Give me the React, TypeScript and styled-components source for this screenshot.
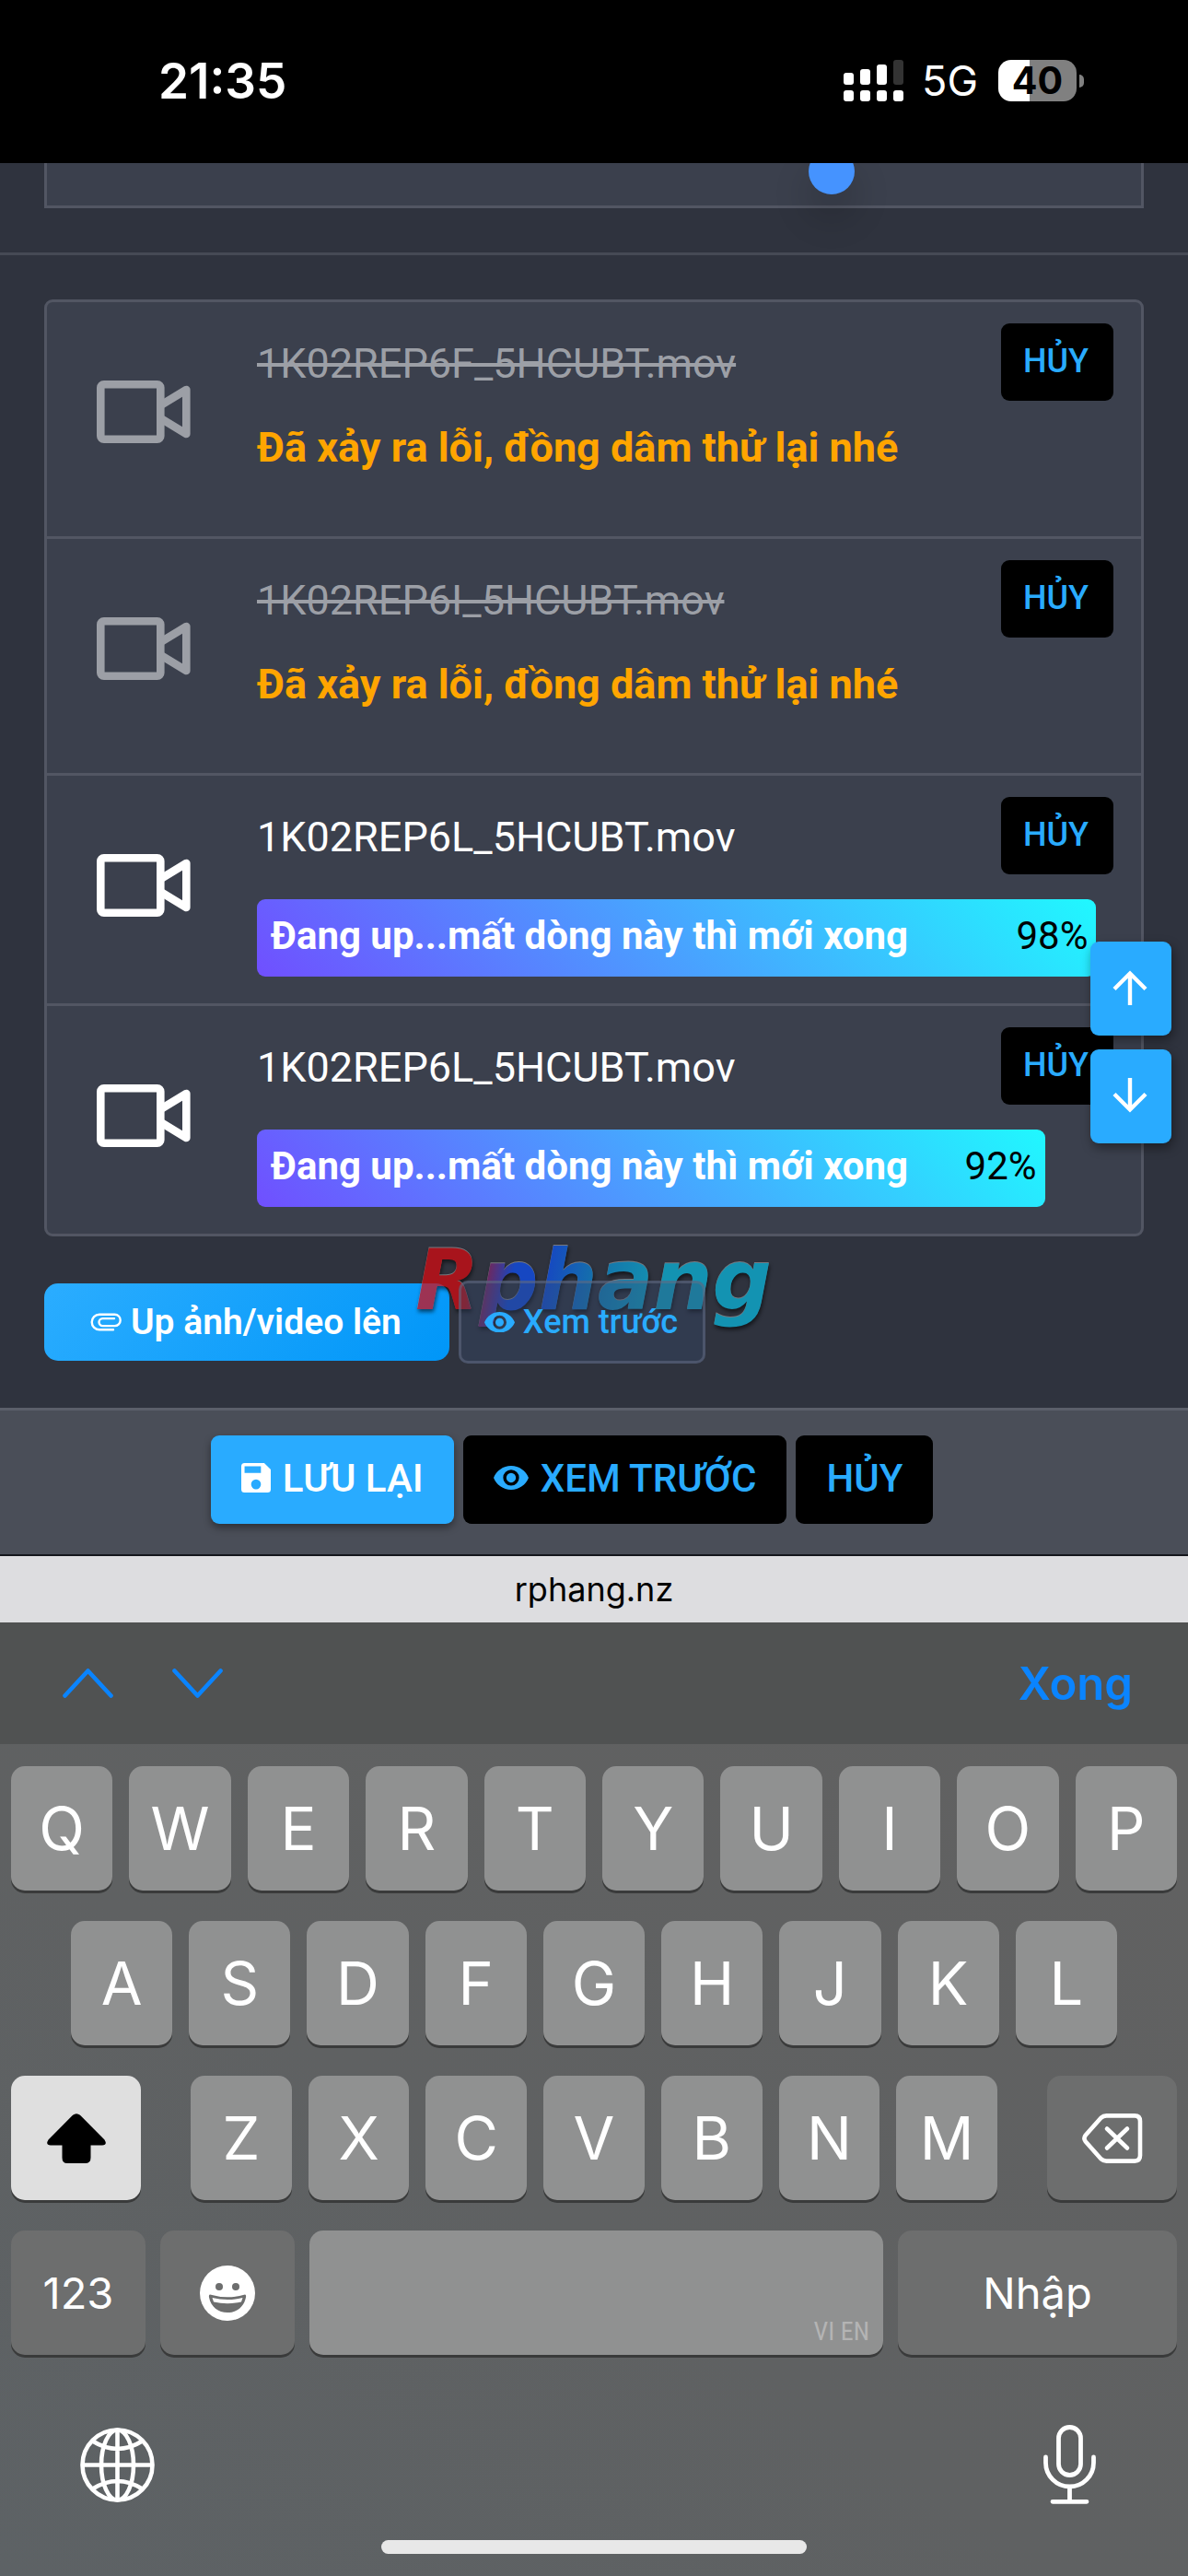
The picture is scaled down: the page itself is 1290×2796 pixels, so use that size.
import React from "react";
import styled, { createGlobalStyle, css } from "styled-components";

const GlobalStyle = createGlobalStyle`
  *, *::before, *::after { box-sizing: border-box; }
  body { margin: 0; background: #2f333e; }
  button, input, textarea { font: inherit; color: inherit; margin: 0; border: 0; padding: 0; }
  button { cursor: pointer; }
  svg { display: block; flex: none; }
`;

const webFont = `Roboto, "Liberation Sans", sans-serif`;
const systemFont = `Inter, "Liberation Sans", sans-serif`;

const Page = styled.div`
  position: relative;
  display: flex;
  flex-direction: column;
  min-height: 100vh;
  overflow: hidden;
  background: #2f333e;
  color: #fff;
  font-family: ${webFont};
`;

/* ---------- status bar ---------- */

const StatusBar = styled.header`
  position: relative;
  z-index: 3;
  display: flex;
  align-items: center;
  justify-content: space-between;
  height: 177px;
  padding: 0 113px 2px 172px;
  background: #000;
  font-family: ${systemFont};
`;

const Clock = styled.time`
  font-size: 53px;
  font-weight: 600;
  line-height: 64px;
`;

const StatusIcons = styled.div`
  display: flex;
  align-items: center;
`;

const Network = styled.span`
  margin: 0 22px 0 20px;
  font-size: 45px;
  font-weight: 400;
  line-height: 54px;
`;

const Battery = styled.div`
  display: flex;
  align-items: center;
  gap: 3px;
`;

const BatteryBody = styled.span`
  width: 85px;
  border-radius: 14px;
  background: linear-gradient(to right, #fff 40%, #808080 40%);
  color: #000;
  font-size: 41px;
  font-weight: 700;
  line-height: 45px;
  text-align: center;
`;

const BatteryTip = styled.span`
  width: 5px;
  height: 14px;
  border-radius: 0 7px 7px 0;
  background: #808080;
`;

/* ---------- page content ---------- */

const EditorSection = styled.section`
  position: relative;
  padding: 0 48px 48px;
  border-bottom: 3px solid #464a55;
`;

const Editor = styled.textarea`
  display: block;
  width: 100%;
  height: 49px;
  border: 3px solid #525663;
  border-top: 0;
  background: #3b404d;
  resize: none;
  outline: none;
`;

const CaretHandle = styled.span`
  position: absolute;
  top: -16px;
  left: 70%;
  width: 50px;
  height: 50px;
  margin-left: -25px;
  border-radius: 50%;
  background: #4593ff;
  box-shadow: 0 24px 36px 6px rgba(0, 0, 0, 0.12);
`;

const UploadSection = styled.section`
  padding: 48px;
`;

const FileList = styled.ul`
  margin: 0;
  padding: 0;
  list-style: none;
  border: 3px solid #525663;
  border-radius: 9px;
  background: #3b404d;
`;

const FileRow = styled.li`
  display: flex;
  align-items: flex-start;
  gap: 72px;
  padding: 23px 30px 29px 54px;

  & + & { border-top: 3px solid #525663; }
`;

const FileIcon = styled.div<{ $failed: boolean }>`
  padding-top: 62px;
  color: ${(p) => (p.$failed ? "#9c9fa6" : "#fff")};
`;

const FileBody = styled.div<{ $failed: boolean }>`
  display: flex;
  flex: 1;
  flex-direction: column;
  gap: ${(p) => (p.$failed ? 24 : 27)}px;
  padding-bottom: ${(p) => (p.$failed ? 40 : 0)}px;
`;

const FileHead = styled.div`
  display: flex;
  align-items: center;
  justify-content: space-between;
`;

const FileName = styled.span<{ $failed: boolean }>`
  padding-top: 4px;
  font-size: 45px;
  line-height: 54px;
  ${(p) => p.$failed && css`
    color: #9c9fa6;
    text-decoration: line-through;
  `}
`;

const ErrorText = styled.strong`
  color: #ffa500;
  font-size: 45px;
  font-weight: 700;
  line-height: 54px;
`;

const CancelButton = styled.button`
  height: 84px;
  padding: 0 27px 2px 24px;
  border-radius: 9px;
  background: #000;
  color: #29abff;
  font-size: 36px;
  font-weight: 500;
`;

const ProgressBar = styled.div`
  display: flex;
  align-items: center;
  justify-content: space-between;
  height: 84px;
  padding: 0 9px 4px 15px;
  border-radius: 9px;
  background: linear-gradient(45deg, #704fff, #20f8ff);
  font-size: 42px;
  line-height: 54px;
  white-space: nowrap;
`;

const ProgressLabel = styled.strong`
  font-weight: 700;
`;

const ProgressValue = styled.span`
  color: #000;
`;

const UploadActions = styled.div`
  position: relative;
  display: flex;
  align-items: center;
  gap: 10px;
  margin-top: 48px;
`;

const UploadButton = styled.button`
  display: flex;
  align-items: center;
  justify-content: center;
  gap: 10px;
  height: 84px;
  padding: 0 52px 0 50px;
  border-radius: 15px;
  background: linear-gradient(135deg, #2badff, #0096f8);
  font-size: 39px;
  font-weight: 600;
`;

const GhostButton = styled.button`
  position: relative;
  z-index: 2;
  display: flex;
  align-items: center;
  gap: 9px;
  height: 90px;
  padding: 0 27px 0 25px;
  border: 3px solid rgba(104, 112, 136, 0.5);
  border-radius: 10px;
  background: rgba(54, 74, 112, 0.35);
  color: #29abff;
  font-size: 36px;
  font-weight: 500;
`;

const Watermark = styled.span`
  position: absolute;
  top: -52px;
  left: 399px;
  z-index: 1;
  padding: 0 12px 0 4px;
  background: linear-gradient(100deg, #dc080e 17%, #0c50fa 28%, #0c50fa 36%, #0a90d8 50%, #08bce4 66%);
  -webkit-background-clip: text;
  background-clip: text;
  color: transparent;
  filter: drop-shadow(0 -1px 0 rgba(255, 255, 255, 0.5)) drop-shadow(1px 3px 2px rgba(0, 0, 0, 0.8));
  font-family: "DejaVu Sans", sans-serif;
  font-size: 90px;
  font-style: italic;
  font-weight: 700;
  line-height: 104px;
  opacity: 0.7;
  pointer-events: none;
`;

const FormBar = styled.div`
  display: flex;
  align-items: flex-start;
  justify-content: center;
  gap: 10px;
  padding: 27px 48px 33px 0;
  border-top: 3px solid #5b5f6a;
  background: #4a4e58;
`;

const FormButton = styled.button<{ $primary?: boolean }>`
  display: flex;
  align-items: center;
  gap: 13px;
  height: 96px;
  padding: 0 33px 4px;
  border-radius: 9px;
  background: ${(p) => (p.$primary ? "#29abff" : "#000")};
  box-shadow: ${(p) => (p.$primary ? "0 4px 9px rgba(0, 0, 0, 0.4)" : "none")};
  color: ${(p) => (p.$primary ? "#fff" : "#29abff")};
  font-size: 42px;
  font-weight: 500;
`;

const ScrollButtons = styled.nav`
  position: absolute;
  top: 1022px;
  right: 18px;
  z-index: 2;
  display: flex;
  flex-direction: column;
  gap: 15px;
`;

const ScrollButton = styled.button`
  display: grid;
  place-items: center;
  width: 88px;
  height: 102px;
  padding: 0 2px 2px 0;
  border-radius: 9px;
  background: #29abff;
  box-shadow: 2px 5px 12px rgba(0, 0, 0, 0.4);
`;

/* ---------- browser bar and keyboard ---------- */

const AddressBar = styled.div`
  border-top: 2px solid #15171d;
  background: #dddde0;
  color: #000;
  font-family: ${systemFont};
  font-size: 36px;
  line-height: 72px;
  text-align: center;
`;

const AccessoryBar = styled.div`
  display: flex;
  align-items: center;
  height: 132px;
  padding: 0 60px;
  background: #505252;
  color: #0a84ff;
  font-family: ${systemFont};
`;

const AccessoryButton = styled.button`
  width: 70px;
  margin-right: 49px;
  padding: 8px;
  background: none;
`;

const DoneButton = styled.button`
  margin-left: auto;
  background: none;
  font-size: 49px;
  font-weight: 600;
`;

const Keyboard = styled.div`
  display: flex;
  flex: 1;
  flex-direction: column;
  gap: 33px;
  padding: 24px 12px;
  background: linear-gradient(to top right, #5d6265, #5f6162 45%, #616161);
  font-family: ${systemFont};
`;

const KeyRow = styled.div<{ $inset?: number; $gap?: number }>`
  display: flex;
  gap: ${(p) => p.$gap ?? 18}px;
  padding: 0 ${(p) => p.$inset ?? 0}px;
`;

const LetterGroup = styled.div`
  display: flex;
  flex: 1;
  gap: 18px;
`;

type KeyTone = "letter" | "special" | "active";
const keyColors: Record<KeyTone, string> = {
  letter: "#909191",
  special: "#6d6e6e",
  active: "#dfdfdf",
};

const Key = styled.button<{ $tone?: KeyTone; $width?: number; $size?: number }>`
  display: grid;
  place-items: center;
  flex: ${(p) => (p.$width ? `0 0 ${p.$width}px` : "1 1 0")};
  height: 135px;
  border-radius: 15px;
  background: ${(p) => keyColors[p.$tone ?? "letter"]};
  box-shadow: 0 3px 0 #3a3b3b;
  color: ${(p) => (p.$tone === "active" ? "#000" : "#fff")};
  font-size: ${(p) => p.$size ?? 65}px;
  font-weight: 400;
`;

const SpaceKey = styled(Key)`
  place-items: end;
  padding: 0 15px 9px;
  color: #b4b4b4;
  font-family: "Liberation Sans Narrow", "Roboto Condensed", "DejaVu Sans Condensed", sans-serif;
  font-size: 28px;
`;

const KeyboardFooter = styled.div`
  display: flex;
  align-items: center;
  justify-content: space-between;
  padding: 43px 88px 0 75px;
`;

const PlainButton = styled.button`
  background: none;
`;

const HomeIndicator = styled.div`
  align-self: center;
  width: 462px;
  height: 15px;
  margin-top: 6px;
  border-radius: 8px;
  background: #e8e8e8;
`;

/* ---------- drawings ---------- */

const SignalIcon = () => (
  <svg width="65" height="45" viewBox="0 0 65 45" fill="#fff" aria-hidden="true">
    <rect x="0" y="14" width="11" height="13" rx="3" />
    <rect x="18" y="10" width="11" height="17" rx="3" />
    <rect x="36" y="5" width="11" height="22" rx="3" />
    <rect x="54" y="0" width="11" height="27" rx="3" fill="#333" />
    {[0, 18, 36, 54].map((x) => (
      <rect key={x} x={x} y="33" width="11" height="12" rx="3" />
    ))}
  </svg>
);

const CameraIcon = () => (
  <svg width="102" height="68" viewBox="0 0 102 68" fill="none" stroke="currentColor" strokeWidth="8.6" strokeLinejoin="round" aria-hidden="true">
    <rect x="4.3" y="4.3" width="65" height="59.4" rx="3.5" />
    <path d="M71 26 97.3 10V58L71 42" />
  </svg>
);

const ArrowIcon = ({ down = false }: { down?: boolean }) => (
  <svg width="38" height="38" viewBox="0 0 38 38" fill="none" stroke="#fff" strokeWidth="4.4" aria-hidden="true">
    <path d={down ? "M19 0V35M2 17.5 19 34.5 36 17.5" : "M19 38V3M2 20.5 19 3.5 36 20.5"} />
  </svg>
);

const ClipIcon = () => (
  <svg width="34" height="20" viewBox="0 0 34 20" fill="none" stroke="currentColor" strokeWidth="2.4" strokeLinecap="round" aria-hidden="true">
    <path d="M25 18.3H10a8.3 8.3 0 0 1 0-16.6H26.5a6.2 6.2 0 0 1 0 12.4H13.5a4 4 0 0 1 0-8H26" />
  </svg>
);

const EyeIcon = ({ width = 33 }: { width?: number }) => (
  <svg width={width} height={(width * 15) / 22} viewBox="1 4.5 22 15" fill="currentColor" aria-hidden="true">
    <path d="M12 4.5C7 4.500 2.730 7.610 1 12c1.730 4.390 6 7.500 11 7.500s9.270-3.110 11-7.500c-1.730-4.390-6-7.500-11-7.500zM12 17a5 5 0 1 1 0-10 5 5 0 0 1 0 10zm0-8a3 3 0 1 0 0 6 3 3 0 0 0 0-6z" />
  </svg>
);

const SaveIcon = () => (
  <svg width="32" height="32" viewBox="3 3 18 18" fill="currentColor" aria-hidden="true">
    <path d="M17 3H5a2 2 0 0 0-2 2v14a2 2 0 0 0 2 2h14a2 2 0 0 0 2-2V7l-4-4zm-5 16a3 3 0 1 1 0-6 3 3 0 0 1 0 6zm3-10H5V5h10v4z" />
  </svg>
);

const ChevronIcon = ({ down = false }: { down?: boolean }) => (
  <svg width="55" height="32" viewBox="0 0 55 32" fill="none" stroke="currentColor" strokeWidth="4.6" strokeLinecap="round" strokeLinejoin="round" aria-hidden="true">
    <path d={down ? "M2.500 2.500 27.500 29.500 52.500 2.500" : "M2.500 29.500 27.500 2.500 52.500 29.500"} />
  </svg>
);

const ShiftIcon = () => (
  <svg width="64" height="54" viewBox="0 0 64 54" fill="currentColor" aria-hidden="true">
    <path d="M28 1.800Q32-1.500 36 1.800L62.500 28.500Q66 34.500 60 34.500H47.500V48Q47.500 54 41.500 54H22Q16.500 54 16.500 48V34.500H4Q-2 34.500 1.500 28.500Z" />
  </svg>
);

const DeleteIcon = () => (
  <svg width="66" height="54" viewBox="0 0 66 54" fill="none" stroke="currentColor" strokeWidth="4.600" strokeLinecap="round" strokeLinejoin="round" aria-hidden="true">
    <path d="M26.500 2.400H57Q63 2.400 63 8.400V45.600Q63 51.600 57 51.600H26.500Q23 51.600 20.500 49.300L3.800 30.500Q1 27 3.800 23.500L20.500 4.700Q23 2.400 26.500 2.400Z" />
    <path d="M27 16.500 49 37.500M49 16.500 27 37.500" />
  </svg>
);

const EmojiIcon = () => (
  <svg width="60" height="60" viewBox="0 0 60 60" aria-hidden="true">
    <circle cx="30" cy="30" r="30" fill="#fff" />
    <circle cx="21" cy="23" r="4" fill="#6d6e6e" />
    <circle cx="39" cy="23" r="4" fill="#6d6e6e" />
    <path d="M11 31.500Q30 37 49 31.500Q50.500 31.500 50 34.500C48 45 40 51 30 51S12 45 10 34.500Q9.500 31.500 11 31.500Z" fill="#6d6e6e" />
    <path d="M13.500 35Q30 39 46.500 35L45 39.500Q30 43 15 39.500Z" fill="#fff" />
  </svg>
);

const GlobeIcon = () => (
  <svg width="81" height="81" viewBox="0 0 81 81" fill="none" stroke="#fff" strokeWidth="4.600" aria-hidden="true">
    <circle cx="40.500" cy="40.500" r="38" />
    <ellipse cx="40.500" cy="40.500" rx="17.500" ry="38" />
    <path d="M40.500 2.500V78.500M2.500 40.500H78.500M13.500 14.500Q40.500 31.500 67.500 14.500M13.500 66.500Q40.500 49.500 67.500 66.500" />
  </svg>
);

const MicIcon = () => (
  <svg width="57" height="86" viewBox="0 0 57 86" fill="none" stroke="#fff" strokeWidth="4.800" strokeLinecap="round" aria-hidden="true">
    <rect x="16.500" y="2.500" width="24" height="52" rx="12" />
    <path d="M2.500 35V41a26 26 0 0 0 52 0V35M28.500 67.500V83M10 83.300H47" />
  </svg>
);

/* ---------- data ---------- */

type Upload = { id: number; name: string; progress: number | null };

const uploads: Upload[] = [
  { id: 1, name: "1K02REP6F_5HCUBT.mov", progress: null },
  { id: 2, name: "1K02REP6I_5HCUBT.mov", progress: null },
  { id: 3, name: "1K02REP6L_5HCUBT.mov", progress: 98 },
  { id: 4, name: "1K02REP6L_5HCUBT.mov", progress: 92 },
];

const UploadRow = ({ upload }: { upload: Upload }) => {
  const failed = upload.progress === null;
  return (
    <FileRow>
      <FileIcon $failed={failed}>
        <CameraIcon />
      </FileIcon>
      <FileBody $failed={failed}>
        <FileHead>
          <FileName $failed={failed}>{upload.name}</FileName>
          <CancelButton type="button">HỦY</CancelButton>
        </FileHead>
        {failed ? (
          <ErrorText>Đã xảy ra lỗi, đồng dâm thử lại nhé</ErrorText>
        ) : (
          <ProgressBar style={{ width: `${upload.progress}%` }}>
            <ProgressLabel>Đang up...mất dòng này thì mới xong</ProgressLabel>
            <ProgressValue>{upload.progress}%</ProgressValue>
          </ProgressBar>
        )}
      </FileBody>
    </FileRow>
  );
};

const letters = (row: string) => row.split("").map((letter) => (
  <Key key={letter} type="button">{letter}</Key>
));

export default function App() {
  return (
    <>
      <GlobalStyle />
      <Page>
        <StatusBar>
          <Clock>21:35</Clock>
          <StatusIcons>
            <SignalIcon />
            <Network>5G</Network>
            <Battery>
              <BatteryBody>40</BatteryBody>
              <BatteryTip />
            </Battery>
          </StatusIcons>
        </StatusBar>

        <main>
          <EditorSection>
            <Editor aria-label="Nội dung" />
            <CaretHandle />
          </EditorSection>

          <UploadSection>
            <FileList>
              {uploads.map((upload) => (
                <UploadRow key={upload.id} upload={upload} />
              ))}
            </FileList>
            <UploadActions>
              <UploadButton type="button">
                <ClipIcon />
                Up ảnh/video lên
              </UploadButton>
              <GhostButton type="button">
                <EyeIcon />
                Xem trước
              </GhostButton>
              <Watermark>Rphang</Watermark>
            </UploadActions>
          </UploadSection>

          <FormBar>
            <FormButton type="submit" $primary>
              <SaveIcon />
              LƯU LẠI
            </FormButton>
            <FormButton type="button">
              <EyeIcon width={38} />
              XEM TRƯỚC
            </FormButton>
            <FormButton type="button">HỦY</FormButton>
          </FormBar>
        </main>

        <ScrollButtons>
          <ScrollButton type="button" aria-label="Lên đầu trang">
            <ArrowIcon />
          </ScrollButton>
          <ScrollButton type="button" aria-label="Xuống cuối trang">
            <ArrowIcon down />
          </ScrollButton>
        </ScrollButtons>

        <AddressBar>rphang.nz</AddressBar>

        <AccessoryBar>
          <AccessoryButton type="button" aria-label="Trước">
            <ChevronIcon />
          </AccessoryButton>
          <AccessoryButton type="button" aria-label="Sau">
            <ChevronIcon down />
          </AccessoryButton>
          <DoneButton type="button">Xong</DoneButton>
        </AccessoryBar>

        <Keyboard>
          <KeyRow>{letters("QWERTYUIOP")}</KeyRow>
          <KeyRow $inset={65}>{letters("ASDFGHJKL")}</KeyRow>
          <KeyRow $gap={54}>
            <Key type="button" $tone="active" $width={141} aria-label="Shift">
              <ShiftIcon />
            </Key>
            <LetterGroup>{letters("ZXCVBNM")}</LetterGroup>
            <Key type="button" $tone="special" $width={141} aria-label="Xóa">
              <DeleteIcon />
            </Key>
          </KeyRow>
          <KeyRow $gap={16}>
            <Key type="button" $tone="special" $width={146} $size={47}>123</Key>
            <Key type="button" $tone="special" $width={146} aria-label="Biểu tượng cảm xúc">
              <EmojiIcon />
            </Key>
            <SpaceKey type="button">VI EN</SpaceKey>
            <Key type="button" $tone="special" $width={303} $size={47}>Nhập</Key>
          </KeyRow>
          <KeyboardFooter>
            <PlainButton type="button" aria-label="Đổi bàn phím">
              <GlobeIcon />
            </PlainButton>
            <PlainButton type="button" aria-label="Đọc chính tả">
              <MicIcon />
            </PlainButton>
          </KeyboardFooter>
          <HomeIndicator />
        </Keyboard>
      </Page>
    </>
  );
}
